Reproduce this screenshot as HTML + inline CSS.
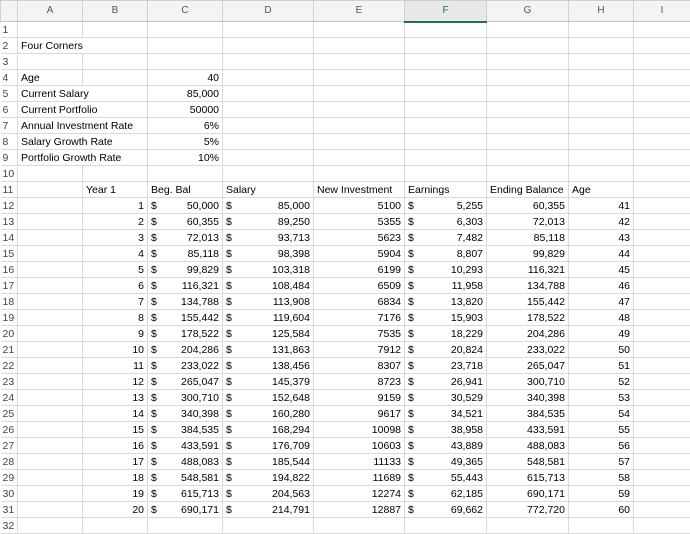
<!DOCTYPE html>
<html><head><meta charset="utf-8"><style>
*{margin:0;padding:0;box-sizing:border-box}
body{width:690px;height:533px;overflow:hidden;background:#fff;font-family:"Liberation Sans",sans-serif;font-size:10.5px;color:#000}
table{border-collapse:collapse;table-layout:fixed;width:690px}
td{height:16px;border:1px solid #dadada;padding:0 3px;white-space:nowrap;overflow:hidden;line-height:14px;vertical-align:bottom}
tr.h td{height:21px;background:#f4f4f4;color:#555;text-align:center;border-color:#d0d0d0;border-bottom:1px solid #c4c4c4;vertical-align:middle;font-size:10px}
tr.h td.sel{background:#e8e8e8;color:#217346;border-bottom:2px solid #217346}
td.n{color:#444;padding:0 2px;border-left:none;text-align:left}
.r{text-align:right}
td.d span{float:left}
</style></head><body>
<table>
<colgroup><col style="width:17px"><col style="width:65px"><col style="width:65px"><col style="width:75px"><col style="width:91px"><col style="width:91px"><col style="width:82px"><col style="width:82px"><col style="width:65px"><col style="width:57px"></colgroup>
<tr class="h"><td></td><td>A</td><td>B</td><td>C</td><td>D</td><td>E</td><td class="sel">F</td><td>G</td><td>H</td><td>I</td></tr>
<tr><td class="n">1</td><td></td><td></td><td></td><td></td><td></td><td></td><td></td><td></td><td></td></tr>
<tr><td class="n">2</td><td colspan="2" style="border-right-color:#dadada">Four Corners</td><td></td><td></td><td></td><td></td><td></td><td></td><td></td></tr>
<tr><td class="n">3</td><td></td><td></td><td></td><td></td><td></td><td></td><td></td><td></td><td></td></tr>
<tr><td class="n">4</td><td>Age</td><td></td><td class="r">40</td><td></td><td></td><td></td><td></td><td></td><td></td></tr>
<tr><td class="n">5</td><td colspan="2">Current Salary</td><td class="r">85,000</td><td></td><td></td><td></td><td></td><td></td><td></td></tr>
<tr><td class="n">6</td><td colspan="2">Current Portfolio</td><td class="r">50000</td><td></td><td></td><td></td><td></td><td></td><td></td></tr>
<tr><td class="n">7</td><td colspan="2">Annual Investment Rate</td><td class="r">6%</td><td></td><td></td><td></td><td></td><td></td><td></td></tr>
<tr><td class="n">8</td><td colspan="2">Salary Growth Rate</td><td class="r">5%</td><td></td><td></td><td></td><td></td><td></td><td></td></tr>
<tr><td class="n">9</td><td colspan="2">Portfolio Growth Rate</td><td class="r">10%</td><td></td><td></td><td></td><td></td><td></td><td></td></tr>
<tr><td class="n">10</td><td></td><td></td><td></td><td></td><td></td><td></td><td></td><td></td><td></td></tr>
<tr><td class="n">11</td><td></td><td>Year 1</td><td>Beg. Bal</td><td>Salary</td><td>New Investment</td><td>Earnings</td><td>Ending Balance</td><td>Age</td><td></td></tr>
<tr><td class="n">12</td><td></td><td class="r">1</td><td class="r d"><span>$</span>50,000</td><td class="r d"><span>$</span>85,000</td><td class="r">5100</td><td class="r d"><span>$</span>5,255</td><td class="r">60,355</td><td class="r">41</td><td></td></tr>
<tr><td class="n">13</td><td></td><td class="r">2</td><td class="r d"><span>$</span>60,355</td><td class="r d"><span>$</span>89,250</td><td class="r">5355</td><td class="r d"><span>$</span>6,303</td><td class="r">72,013</td><td class="r">42</td><td></td></tr>
<tr><td class="n">14</td><td></td><td class="r">3</td><td class="r d"><span>$</span>72,013</td><td class="r d"><span>$</span>93,713</td><td class="r">5623</td><td class="r d"><span>$</span>7,482</td><td class="r">85,118</td><td class="r">43</td><td></td></tr>
<tr><td class="n">15</td><td></td><td class="r">4</td><td class="r d"><span>$</span>85,118</td><td class="r d"><span>$</span>98,398</td><td class="r">5904</td><td class="r d"><span>$</span>8,807</td><td class="r">99,829</td><td class="r">44</td><td></td></tr>
<tr><td class="n">16</td><td></td><td class="r">5</td><td class="r d"><span>$</span>99,829</td><td class="r d"><span>$</span>103,318</td><td class="r">6199</td><td class="r d"><span>$</span>10,293</td><td class="r">116,321</td><td class="r">45</td><td></td></tr>
<tr><td class="n">17</td><td></td><td class="r">6</td><td class="r d"><span>$</span>116,321</td><td class="r d"><span>$</span>108,484</td><td class="r">6509</td><td class="r d"><span>$</span>11,958</td><td class="r">134,788</td><td class="r">46</td><td></td></tr>
<tr><td class="n">18</td><td></td><td class="r">7</td><td class="r d"><span>$</span>134,788</td><td class="r d"><span>$</span>113,908</td><td class="r">6834</td><td class="r d"><span>$</span>13,820</td><td class="r">155,442</td><td class="r">47</td><td></td></tr>
<tr><td class="n">19</td><td></td><td class="r">8</td><td class="r d"><span>$</span>155,442</td><td class="r d"><span>$</span>119,604</td><td class="r">7176</td><td class="r d"><span>$</span>15,903</td><td class="r">178,522</td><td class="r">48</td><td></td></tr>
<tr><td class="n">20</td><td></td><td class="r">9</td><td class="r d"><span>$</span>178,522</td><td class="r d"><span>$</span>125,584</td><td class="r">7535</td><td class="r d"><span>$</span>18,229</td><td class="r">204,286</td><td class="r">49</td><td></td></tr>
<tr><td class="n">21</td><td></td><td class="r">10</td><td class="r d"><span>$</span>204,286</td><td class="r d"><span>$</span>131,863</td><td class="r">7912</td><td class="r d"><span>$</span>20,824</td><td class="r">233,022</td><td class="r">50</td><td></td></tr>
<tr><td class="n">22</td><td></td><td class="r">11</td><td class="r d"><span>$</span>233,022</td><td class="r d"><span>$</span>138,456</td><td class="r">8307</td><td class="r d"><span>$</span>23,718</td><td class="r">265,047</td><td class="r">51</td><td></td></tr>
<tr><td class="n">23</td><td></td><td class="r">12</td><td class="r d"><span>$</span>265,047</td><td class="r d"><span>$</span>145,379</td><td class="r">8723</td><td class="r d"><span>$</span>26,941</td><td class="r">300,710</td><td class="r">52</td><td></td></tr>
<tr><td class="n">24</td><td></td><td class="r">13</td><td class="r d"><span>$</span>300,710</td><td class="r d"><span>$</span>152,648</td><td class="r">9159</td><td class="r d"><span>$</span>30,529</td><td class="r">340,398</td><td class="r">53</td><td></td></tr>
<tr><td class="n">25</td><td></td><td class="r">14</td><td class="r d"><span>$</span>340,398</td><td class="r d"><span>$</span>160,280</td><td class="r">9617</td><td class="r d"><span>$</span>34,521</td><td class="r">384,535</td><td class="r">54</td><td></td></tr>
<tr><td class="n">26</td><td></td><td class="r">15</td><td class="r d"><span>$</span>384,535</td><td class="r d"><span>$</span>168,294</td><td class="r">10098</td><td class="r d"><span>$</span>38,958</td><td class="r">433,591</td><td class="r">55</td><td></td></tr>
<tr><td class="n">27</td><td></td><td class="r">16</td><td class="r d"><span>$</span>433,591</td><td class="r d"><span>$</span>176,709</td><td class="r">10603</td><td class="r d"><span>$</span>43,889</td><td class="r">488,083</td><td class="r">56</td><td></td></tr>
<tr><td class="n">28</td><td></td><td class="r">17</td><td class="r d"><span>$</span>488,083</td><td class="r d"><span>$</span>185,544</td><td class="r">11133</td><td class="r d"><span>$</span>49,365</td><td class="r">548,581</td><td class="r">57</td><td></td></tr>
<tr><td class="n">29</td><td></td><td class="r">18</td><td class="r d"><span>$</span>548,581</td><td class="r d"><span>$</span>194,822</td><td class="r">11689</td><td class="r d"><span>$</span>55,443</td><td class="r">615,713</td><td class="r">58</td><td></td></tr>
<tr><td class="n">30</td><td></td><td class="r">19</td><td class="r d"><span>$</span>615,713</td><td class="r d"><span>$</span>204,563</td><td class="r">12274</td><td class="r d"><span>$</span>62,185</td><td class="r">690,171</td><td class="r">59</td><td></td></tr>
<tr><td class="n">31</td><td></td><td class="r">20</td><td class="r d"><span>$</span>690,171</td><td class="r d"><span>$</span>214,791</td><td class="r">12887</td><td class="r d"><span>$</span>69,662</td><td class="r">772,720</td><td class="r">60</td><td></td></tr>
<tr><td class="n">32</td><td></td><td></td><td></td><td></td><td></td><td></td><td></td><td></td><td></td></tr>
</table>
</body></html>
